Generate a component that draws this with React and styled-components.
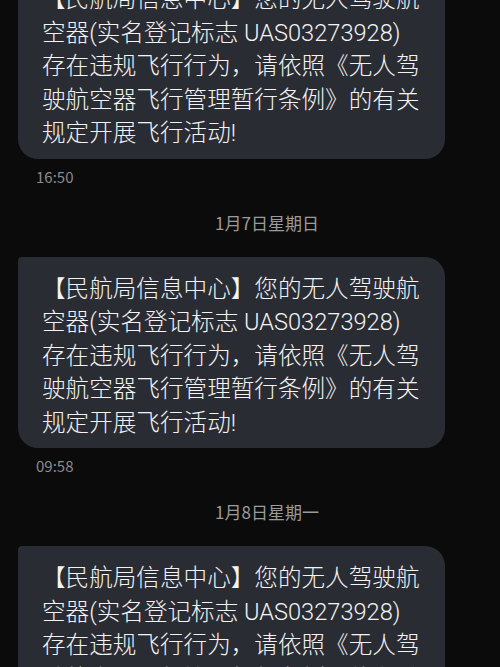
import React from "react";
import styled, { createGlobalStyle } from "styled-components";

const GlobalStyle = createGlobalStyle`
  html, body {
    margin: 0;
    padding: 0;
    background-color: #0b0b0c;
  }
  body {
    font-family: "Noto Sans CJK SC", "Noto Sans", sans-serif;
  }
`;

const Thread = styled.div`
  width: 500px;
  height: 667px;
  overflow: hidden;
  background-color: #0b0b0c;
`;

const List = styled.div`
  display: flex;
  flex-direction: column;
  margin-top: -33px;
`;

const Bubble = styled.div`
  width: 427px;
  box-sizing: border-box;
  margin: ${(p) => (p.first ? "0" : "24px")} 0 0 18px;
  padding: 16px 24px 8px;
  border-radius: 4px 20px 20px 20px;
  background-color: #2a2c33;
  color: #f3f3f3;
  font-family: Roboto, "Noto Sans CJK SC", sans-serif;
  font-size: 23.6px;
  font-weight: 300;
  line-height: 33.5px;
  white-space: nowrap;
`;

const Line = styled.div``;

const Time = styled.div`
  margin: 9px 0 0 36px;
  font-size: 15px;
  line-height: 18px;
  color: #8c8c8c;
`;

const DateRow = styled.div`
  margin-top: 27px;
  padding-left: 34px;
  text-align: center;
  font-size: 17px;
  line-height: 20px;
  color: #9b9b9b;
`;

const lines = [
  "【民航局信息中心】您的无人驾驶航",
  "空器(实名登记标志 UAS03273928)",
  "存在违规飞行行为，请依照《无人驾",
  "驶航空器飞行管理暂行条例》的有关",
  "规定开展飞行活动!",
];

const messages = [
  { time: "16:50", date: "1月7日星期日" },
  { time: "09:58", date: "1月8日星期一" },
  { time: null, date: null },
];

const App = () => {
  return (
    <Thread>
      <GlobalStyle />
      <List>
        {messages.map((msg, i) => (
          <React.Fragment key={i}>
            <Bubble first={i === 0}>
              {lines.map((line) => (
                <Line key={line}>{line}</Line>
              ))}
            </Bubble>
            {msg.time && <Time>{msg.time}</Time>}
            {msg.date && <DateRow>{msg.date}</DateRow>}
          </React.Fragment>
        ))}
      </List>
    </Thread>
  );
};

export default App;
